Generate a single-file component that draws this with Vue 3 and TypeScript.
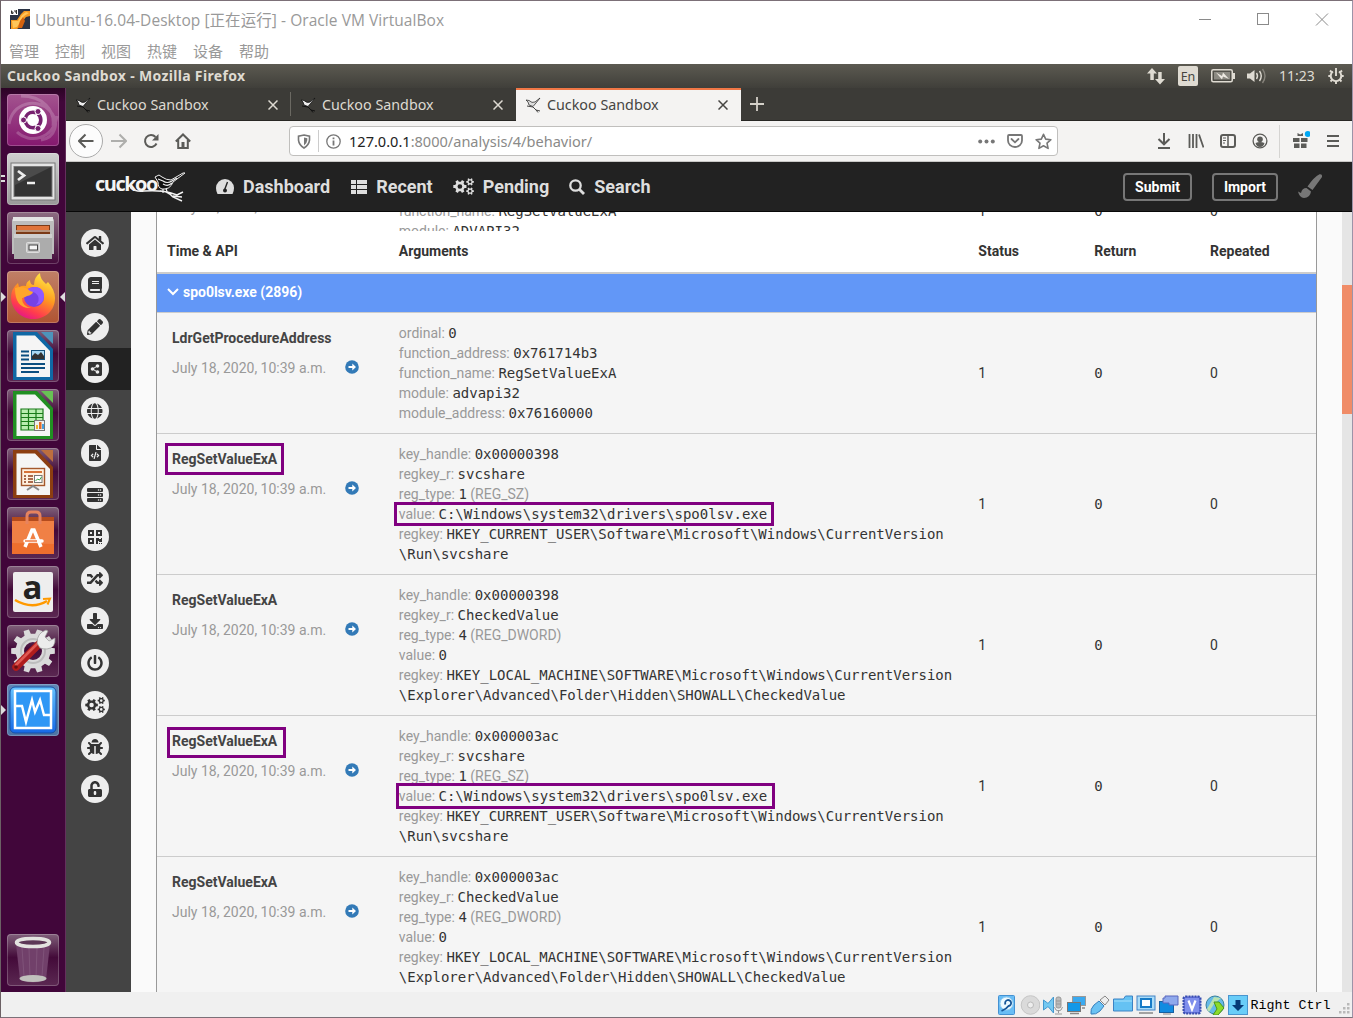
<script setup lang="ts">
interface Arg {
  label: string
  value: string
  note?: string
}
interface Call {
  api: string
  args: Arg[]
}
interface Glyph {
  name: string
  box: string
  w: number
  d: string
}

const menus = ['管理', '控制', '视图', '热键', '设备', '帮助']
const tabs = [{ active: false }, { active: false }, { active: true }]

function gear(cx: number, cy: number, outer: number, inner: number, hole: number, teeth: number): string {
  const step = (Math.PI * 2) / teeth
  const pts: string[] = []
  for (let i = 0; i < teeth; i++) {
    const a = i * step
    const spots: [number, number][] = [
      [a - step * 0.3, inner],
      [a - step * 0.2, outer],
      [a + step * 0.2, outer],
      [a + step * 0.3, inner],
    ]
    for (const [t, r] of spots) {
      pts.push(`${(cx + Math.cos(t) * r).toFixed(2)} ${(cy + Math.sin(t) * r).toFixed(2)}`)
    }
  }
  return (
    `M${pts.join('L')}Z` +
    `M${cx - hole} ${cy}a${hole} ${hole} 0 1 0 ${hole * 2} 0a${hole} ${hole} 0 1 0 ${-hole * 2} 0Z`
  )
}

const cogs = gear(210, 256, 205, 150, 72, 6) + gear(520, 115, 118, 85, 42, 6) + gear(520, 397, 118, 85, 42, 6)

const glyphs: Glyph[] = [
  { name: 'home', box: '0 0 576 512', w: 18, d: 'M280.37 148.26L96 300.11V464a16 16 0 0 0 16 16l112.06-.29a16 16 0 0 0 15.92-16V368a16 16 0 0 1 16-16h64a16 16 0 0 1 16 16v95.64a16 16 0 0 0 16 16.05L464 480a16 16 0 0 0 16-16V300L295.67 148.26a12.19 12.19 0 0 0-15.3 0zM571.6 251.47L488 182.56V44.05a12 12 0 0 0-12-12h-56a12 12 0 0 0-12 12v72.61L318.47 43a48 48 0 0 0-61 0L4.34 251.47a12 12 0 0 0-1.6 16.9l25.5 31A12 12 0 0 0 45.15 301l235.22-193.74a12.19 12.19 0 0 1 15.3 0L530.9 301a12 12 0 0 0 16.9-1.6l25.5-31a12 12 0 0 0-1.7-16.93z' },
  { name: 'summary', box: '0 0 448 512', w: 14, d: 'M448 360V24c0-13.3-10.7-24-24-24H96C43 0 0 43 0 96v320c0 53 43 96 96 96h328c13.3 0 24-10.7 24-24v-16c0-7.5-3.5-14.3-8.9-18.7-4.2-15.4-4.2-59.3 0-74.7 5.4-4.3 8.9-11.1 8.9-18.6zM128 134c0-3.3 2.7-6 6-6h212c3.3 0 6 2.7 6 6v20c0 3.3-2.7 6-6 6H134c-3.3 0-6-2.7-6-6v-20zm0 64c0-3.3 2.7-6 6-6h212c3.3 0 6 2.7 6 6v20c0 3.3-2.7 6-6 6H134c-3.3 0-6-2.7-6-6v-20zm253.4 250H96c-17.7 0-32-14.3-32-32 0-17.6 14.4-32 32-32h285.4c-1.9 17.1-1.9 46.9 0 64z' },
  { name: 'static', box: '0 0 512 512', w: 16, d: 'M497.9 142.1l-46.1 46.1c-4.7 4.7-12.3 4.7-17 0l-111-111c-4.7-4.7-4.7-12.3 0-17l46.1-46.1c18.7-18.7 49.1-18.7 67.9 0l60.1 60.1c18.8 18.7 18.8 49.1 0 67.9zM284.2 99.8L21.6 362.4.4 483.9c-2.9 16.4 11.4 30.6 27.8 27.8l121.5-21.3 262.6-262.6c4.7-4.7 4.7-12.3 0-17l-111-111c-4.8-4.7-12.4-4.7-17.1 0zM88 424h48v36.3l-64.5 11.3-31.1-31.1L51.7 376H88v48z' },
  { name: 'behavior', box: '0 0 448 512', w: 14, d: 'M448 80v352c0 26.51-21.49 48-48 48H48c-26.51 0-48-21.49-48-48V80c0-26.51 21.49-48 48-48h352c26.51 0 48 21.49 48 48zM304 296c-14.562 0-27.823 5.561-37.783 14.671l-67.958-40.775a56.339 56.339 0 0 0 0-27.793l67.958-40.775C276.177 210.439 289.438 216 304 216c30.928 0 56-25.072 56-56s-25.072-56-56-56-56 25.072-56 56c0 4.797.605 9.453 1.74 13.897l-67.958 40.775C171.823 205.561 158.562 200 144 200c-30.928 0-56 25.072-56 56s25.072 56 56 56c14.562 0 27.823-5.561 37.783-14.671l67.958 40.775a56.088 56.088 0 0 0-1.74 13.897c0 30.928 25.072 56 56 56s56-25.072 56-56C360 321.072 334.928 296 304 296z' },
  { name: 'network', box: '0 0 496 512', w: 15.5, d: 'M336.5 160C322 70.7 287.8 8 248 8s-74 62.7-88.5 152h177zM152 256c0 22.2 1.2 43.5 3.3 64h185.3c2.1-20.5 3.3-41.8 3.3-64s-1.2-43.5-3.3-64H155.3c-2.1 20.5-3.3 41.8-3.3 64zm324.7-96c-28.6-67.9-86.5-120.4-158-141.6 24.4 33.8 41.2 84.7 50 141.6h108zM177.2 18.4C105.8 39.6 47.8 92.1 19.3 160h108c8.7-56.9 25.5-107.8 49.9-141.6zM487.4 192H372.7c2.1 21 3.3 42.5 3.3 64s-1.2 43-3.3 64h114.6c5.5-20.5 8.6-41.8 8.6-64s-3.1-43.5-8.5-64zM120 256c0-21.5 1.2-43 3.3-64H8.6C3.2 212.5 0 233.8 0 256s3.2 43.5 8.6 64h114.6c-2-21-3.2-42.5-3.2-64zm39.5 96c14.5 89.3 48.7 152 88.5 152s74-62.7 88.5-152h-177zm159.3 141.6c71.4-21.2 129.4-73.7 158-141.6h-108c-8.8 56.9-25.6 107.8-50 141.6zM19.3 352c28.6 67.9 86.5 120.4 158 141.6-24.4-33.8-41.2-84.7-50-141.6h-108z' },
  { name: 'dropped', box: '0 0 384 512', w: 12, d: 'M384 121.941V128H256V0h6.059c6.365 0 12.47 2.529 16.971 7.029l97.941 97.941A24.005 24.005 0 0 1 384 121.941zM248 160c-13.2 0-24-10.8-24-24V0H24C10.745 0 0 10.745 0 24v464c0 13.255 10.745 24 24 24h336c13.255 0 24-10.745 24-24V160H248zM123.206 400.505a5.4 5.4 0 0 1-7.633.246l-64.866-60.812a5.4 5.4 0 0 1 0-7.879l64.866-60.812a5.4 5.4 0 0 1 7.633.246l19.579 20.885a5.4 5.4 0 0 1-.372 7.747L101.65 336l40.763 35.874a5.4 5.4 0 0 1 .372 7.747l-19.579 20.884zm51.295 50.479l-27.453-7.97a5.402 5.402 0 0 1-3.681-6.692l61.44-211.626a5.402 5.402 0 0 1 6.692-3.681l27.452 7.97a5.4 5.4 0 0 1 3.68 6.692l-61.44 211.626a5.397 5.397 0 0 1-6.69 3.681zm160.792-111.045l-64.866 60.812a5.4 5.4 0 0 1-7.633-.246l-19.58-20.885a5.4 5.4 0 0 1 .372-7.747L284.35 336l-40.763-35.874a5.4 5.4 0 0 1-.372-7.747l19.58-20.885a5.4 5.4 0 0 1 7.633-.246l64.866 60.812a5.4 5.4 0 0 1-.001 7.879z' },
  { name: 'buffers', box: '0 0 512 512', w: 16, d: [32, 192, 352].map((y) => `M32 ${y}h448a32 32 0 0 1 32 32v64a32 32 0 0 1-32 32H32a32 32 0 0 1-32-32v-64a32 32 0 0 1 32-32zM344 ${y + 64}a24 24 0 1 0 48 0a24 24 0 1 0-48 0zM408 ${y + 64}a24 24 0 1 0 48 0a24 24 0 1 0-48 0z`).join('') },
  { name: 'memory', box: '0 0 448 512', w: 14, d: 'M0 224h192V32H0v192zM64 96h64v64H64V96zm192-64v192h192V32H256zm128 128h-64V96h64v64zM0 480h192V288H0v192zm64-128h64v64H64v-64zm352-64h32v128h-96v-32h-32v96h-64V288h96v32h64v-32zm0 160h32v32h-32v-32zm-64 0h32v32h-32v-32z' },
  { name: 'compare', box: '0 0 512 512', w: 16, d: 'M504.971 359.029c9.373 9.373 9.373 24.569 0 33.941l-80 79.984c-15.01 15.01-40.971 4.49-40.971-16.971V416h-58.785a12.004 12.004 0 0 1-8.773-3.812l-70.556-75.596 53.333-57.143L352 336h32v-39.981c0-21.438 25.943-31.998 40.971-16.971l80 79.981zM12 176h84l52.781 56.551 53.333-57.143-70.556-75.596A11.999 11.999 0 0 0 122.785 96H12c-6.627 0-12 5.373-12 12v56c0 6.627 5.373 12 12 12zm372 0v39.984c0 21.46 25.961 31.98 40.971 16.971l80-79.984c9.373-9.373 9.373-24.569 0-33.941l-80-79.981C409.943 24.021 384 34.582 384 56.019V96h-58.785a12.004 12.004 0 0 0-8.773 3.812L96 336H12c-6.627 0-12 5.373-12 12v56c0 6.627 5.373 12 12 12h110.785c3.326 0 6.503-1.381 8.773-3.812L352 176h32z' },
  { name: 'export', box: '0 0 512 512', w: 16, d: 'M216 0h80c13.3 0 24 10.7 24 24v168h87.7c17.8 0 26.7 21.5 14.1 34.1L269.7 378.3c-7.5 7.5-19.8 7.5-27.3 0L90.1 226.1c-12.6-12.6-3.7-34.1 14.1-34.1H192V24c0-13.3 10.7-24 24-24zm296 376v112c0 13.3-10.7 24-24 24H24c-13.3 0-24-10.7-24-24V376c0-13.3 10.7-24 24-24h146.7l49 49c20.1 20.1 52.5 20.1 72.6 0l49-49H488c13.3 0 24 10.7 24 24zm-124 88c0-11-9-20-20-20s-20 9-20 20 9 20 20 20 20-9 20-20zm64 0c0-11-9-20-20-20s-20 9-20 20 9 20 20 20 20-9 20-20z' },
  { name: 'reboot', box: '0 0 512 512', w: 16, d: 'M400 54.1c63 45 104 118.6 104 201.9 0 136.8-110.8 247.7-247.5 248C120 504.3 8.2 393 8 256.4 7.9 173.1 48.9 99.3 111.8 54.2c11.7-8.3 28-4.8 35 7.7L162.6 90c5.9 10.5 3.1 23.8-6.6 31-41.5 30.8-68 79.6-68 134.9-.1 92.3 74.5 168.1 168 168.1 91.6 0 168.6-74.2 168-169.1-.3-51.8-24.7-101.8-68.1-134-9.7-7.2-12.4-20.5-6.5-30.9l15.8-28.1c7-12.4 23.2-16.1 34.8-7.8zM296 264V24c0-13.3-10.7-24-24-24h-32c-13.3 0-24 10.7-24 24v240c0 13.3 10.7 24 24 24h32c13.3 0 24-10.7 24-24z' },
  { name: 'options', box: '0 0 640 512', w: 20, d: cogs },
  { name: 'feedback', box: '0 0 512 512', w: 16, d: 'M511.988 288.9c-.478 17.43-15.217 31.1-32.653 31.1H424v16c0 21.864-4.882 42.584-13.6 61.145l60.228 60.228c12.496 12.497 12.496 32.758 0 45.255-12.498 12.497-32.759 12.496-45.256 0l-54.736-54.736C345.886 467.965 314.351 480 280 480V236c0-6.627-5.373-12-12-12h-24c-6.627 0-12 5.373-12 12v244c-34.351 0-65.886-12.035-90.636-32.108l-54.736 54.736c-12.498 12.497-32.759 12.496-45.256 0-12.496-12.497-12.496-32.758 0-45.255l60.228-60.228C92.882 378.584 88 357.864 88 336v-16H32.666C15.23 320 .491 306.33.013 288.9-.484 270.816 13.453 256 31.4 256H88v-58.745l-46.628-46.628c-12.496-12.497-12.496-32.758 0-45.255 12.498-12.497 32.758-12.497 45.256 0L141.255 160h229.489l54.627-54.627c12.498-12.497 32.758-12.497 45.256 0 12.496 12.497 12.496 32.758 0 45.255L424 197.255V256h56.6c17.9 0 31.9 14.8 31.388 32.9zM257 0c-61.856 0-112 50.144-112 112h224C369 50.144 318.856 0 257 0z' },
  { name: 'unlock', box: '0 0 448 512', w: 14, d: 'M400 256H152V152.9c0-39.6 31.7-72.5 71.3-72.9 40-.4 72.7 32.1 72.7 72v16c0 13.3 10.7 24 24 24h32c13.3 0 24-10.7 24-24v-16C376 68 307.5-.3 223.5 0 139.5.3 72 69.5 72 153.5V256H48c-26.5 0-48 21.5-48 48v160c0 26.5 21.5 48 48 48h352c26.5 0 48-21.5 48-48V304c0-26.5-21.5-48-48-48zM264 408c0 22.1-17.9 40-40 40s-40-17.9-40-40v-48c0-22.1 17.9-40 40-40s40 17.9 40 40v48z' },
]

const bigGear = gear(26, 26, 22, 17.5, 9, 10)

const share = (handle: string): Arg[] => [
  { label: 'key_handle:', value: handle },
  { label: 'regkey_r:', value: 'svcshare' },
  { label: 'reg_type:', value: '1', note: '(REG_SZ)' },
  { label: 'value:', value: 'C:\\Windows\\system32\\drivers\\spo0lsv.exe' },
  { label: 'regkey:', value: 'HKEY_CURRENT_USER\\Software\\Microsoft\\Windows\\CurrentVersion' },
  { label: '', value: '\\Run\\svcshare' },
]
const checked = (handle: string): Arg[] => [
  { label: 'key_handle:', value: handle },
  { label: 'regkey_r:', value: 'CheckedValue' },
  { label: 'reg_type:', value: '4', note: '(REG_DWORD)' },
  { label: 'value:', value: '0' },
  { label: 'regkey:', value: 'HKEY_LOCAL_MACHINE\\SOFTWARE\\Microsoft\\Windows\\CurrentVersion' },
  { label: '', value: '\\Explorer\\Advanced\\Folder\\Hidden\\SHOWALL\\CheckedValue' },
]
const calls: Call[] = [
  {
    api: 'LdrGetProcedureAddress',
    args: [
      { label: 'ordinal:', value: '0' },
      { label: 'function_address:', value: '0x761714b3' },
      { label: 'function_name:', value: 'RegSetValueExA' },
      { label: 'module:', value: 'advapi32' },
      { label: 'module_address:', value: '0x76160000' },
    ],
  },
  { api: 'RegSetValueExA', args: share('0x00000398') },
  { api: 'RegSetValueExA', args: checked('0x00000398') },
  { api: 'RegSetValueExA', args: share('0x000003ac') },
  { api: 'RegSetValueExA', args: checked('0x000003ac') },
]
const stamp = 'July 18, 2020, 10:39 a.m.'
</script>

<template>
  <div class="window">
    <header class="titlebar">
      <svg class="vbox" width="20" height="20" viewBox="0 0 20 20">
        <rect width="20" height="20" fill="#2b3345" />
        <path d="M1 11h6l4-6 3-3h6v5l-4 1-4 5-2 5-3 2H1z" fill="#f59a22" />
        <path d="M2 12h6l4-6 4-3 3 1-5 3-4 6-3 5-4 1z" fill="#ffc65a" />
        <path d="M10 12l3-4 2 4-3 7h-4z" fill="#d4620f" />
        <rect width="8" height="6" fill="#fff" /><path d="M1.5 1.500v3h1.500v-1.500h-1.500M5 1v2h2M6.500 1v4" stroke="#333" fill="none" />
      </svg>
      <span class="wtitle">Ubuntu-16.04-Desktop [正在运行] - Oracle VM VirtualBox</span>
      <svg width="130" height="14" viewBox="0 0 130 14" fill="none" stroke="#8a8a8a">
        <path d="M0 6.500h12" /><rect x="58.500" y=".5" width="11" height="11" /><path d="M117 .5l12 12M129 .5l-12 12" />
      </svg>
    </header>
    <nav class="menubar"><span v-for="m in menus" :key="m">{{ m }}</span></nav>

    <div class="panel">
      <b class="ptitle">Cuckoo Sandbox - Mozilla Firefox</b>
      <svg width="18" height="18" viewBox="0 0 18 18" fill="#dfdbd2"><path d="M5 1l5 5.500H6.800V13H3.300V6.500H0zM13 17.500L8 12h3.200V5h3.500v7H18z" /></svg>
      <span class="kbd">En</span>
      <svg width="24" height="14" viewBox="0 0 24 14"><rect x=".75" y=".75" width="20.500" height="12" rx="1.500" fill="none" stroke="#dfdbd2" stroke-width="1.500" /><rect x="3" y="3" width="16" height="7.500" fill="#8c8a82" /><path d="M22 4h2v6h-2z" fill="#dfdbd2" /><path d="M5 3.500L11 7l1-3.500L18 10l-6-2.500-1 3z" fill="#eeeae2" /></svg>
      <svg class="i-vol" width="20" height="16" viewBox="0 0 20 16" fill="none" stroke="#dfdbd2" stroke-width="1.400"><path d="M0 5.500h3L7.500 2v12L3 10.500H0z" fill="#dfdbd2" stroke="none" /><path d="M9.500 5q2 3 0 6M12.500 3q3.500 5 0 10" /><path d="M15.500 1q5 7 0 14" stroke="#85827a" /></svg>
      <span class="clock">11:23</span>
      <svg width="16" height="16" viewBox="0 0 16 16"><path d="M5 3.500a5.300 5.300 0 1 0 6 0" fill="none" stroke="#dfdbd2" stroke-width="2" /><path d="M8 0v8M.3 8H3M13 8h2.700M8 13v3M2 2.500l2 2M14 2.500l-2 2M2.500 13.500l2-2M13.500 13.500l-2-2" stroke="#dfdbd2" stroke-width="1.900" /></svg>
    </div>

    <div class="desktop">
      <aside class="launcher">
        <div class="tile" style="--t: #a3548f; --b: #85186f">
          <svg viewBox="0 0 52 52"><path d="M2 30C6 8 30 4 42 16s6 28-8 30M14 2c22 0 34 14 32 30M50 22C46 46 22 50 10 38" fill="none" stroke="#fff" stroke-opacity=".2" stroke-width="3" /><circle cx="26" cy="26" r="14" fill="#fff" /><circle cx="26" cy="26" r="7.800" fill="none" stroke="#77216f" stroke-width="3.600" stroke-dasharray="14.300 2.040" stroke-dashoffset="-9.200" /><g fill="#77216f" stroke="#fff"><circle cx="16.500" cy="26" r="3" /><circle cx="31" cy="17.500" r="3" /><circle cx="31" cy="34.500" r="3" /></g></svg>
        </div>
        <div class="tile" style="--t: #d0d0d0; --b: #999">
          <i class="pips"></i>
          <svg viewBox="0 0 52 52"><rect x="4" y="10" width="44" height="37" fill="#e4e4e4" stroke="#777" /><rect x="7" y="13.500" width="38" height="30" fill="#333" stroke="#777" /><path d="M8 14h36L8 32z" fill="#4b4b4b" /><path d="M11 18l6 4.500-6 4.500" fill="none" stroke="#eee" stroke-width="2.800" /><path d="M20 30h8" stroke="#eee" stroke-width="2.500" /></svg>
        </div>
        <div class="tile" style="--t: #8d6d82; --b: #43093a">
          <svg viewBox="0 0 52 52"><path d="M5 8l2-3h38l2 3v34H5z" fill="#bdbdbd" /><path d="M6 5h40v4H6z" fill="#e5e5e5" /><path d="M9 13h34v10H9z" fill="#7b3a17" /><path d="M10 14h32v4H10z" fill="#e0743a" /><path d="M9 19h34" stroke="#f7ede0" /><path d="M7 22h38v25H7z" fill="#acacac" /><path d="M7 22h38v4H7z" fill="#cfcfcf" /><rect x="19.500" y="30.500" width="13" height="10" rx="1" fill="#c6c6c6" stroke="#dedede" /><rect x="22" y="33" width="8.500" height="5" fill="#f5f5f5" stroke="#444" /></svg>
        </div>
        <div class="tile" style="--t: #c08067; --b: #b05432">
          <i class="tri left"></i><i class="tri right"></i>
          <svg viewBox="0 0 52 52"><defs><linearGradient id="ff" x1=".8" y1="0" x2=".3" y2="1"><stop offset="0" stop-color="#fff04a" /><stop offset=".45" stop-color="#ff9b1f" /><stop offset=".8" stop-color="#ff3b4e" /><stop offset="1" stop-color="#e3158b" /></linearGradient></defs><path d="M4 26q0-8 7-14l1 4q4-2 7-1 0-4 4-6 0 5 4 5 0-8 6-12 0 6 6 11l2-2q7 8 7 16C48 40 38 48 26 48S4 38 4 26z" fill="url(#ff)" /><circle cx="27" cy="26" r="10" fill="#7542e5" /><path d="M17 22q4-7 13-6 7 2 7 9 0 8-8 9 4-4 2-9-4-6-9-3z" fill="#9059ff" /><path d="M8 17q9-3 15 3l3 1q-1 3-6 4-4 2-5 2 0 8 9 10-16 1-16-20z" fill="#ffa62b" /></svg>
        </div>
        <div class="tile dim">
          <svg viewBox="0 0 52 52"><path d="M6 2h24l16 17v31H6z" fill="#0f68a5" /><path d="M34 2h12v12z" fill="#4d94bb" /><path d="M9.500 5.500H28L43 21v26H9.500z" fill="#f5f5f5" /><path d="M14 21.500h8M14 25.500h8M14 29.500h8M14 34h24M14 38h24M14 42h18" stroke="#0c4f80" stroke-width="1.900" /><rect x="24.500" y="20.500" width="13" height="9" fill="#a8d8f3" stroke="#15537d" /><path d="M25 29v-3l3-3 3 2 3-3 3 4v3z" fill="#333" /></svg>
        </div>
        <div class="tile dim">
          <svg viewBox="0 0 52 52"><path d="M6 2h24l16 17v31H6z" fill="#219022" /><path d="M34 2h12v12z" fill="#68c254" /><path d="M9.500 5.500H28L43 21v26H9.500z" fill="#f5f5f5" /><path d="M14 20h22v21H14z" fill="#b9edb0" /><path d="M14 20h22v21H14zM14 24.500h22M14 28.500h22M14 32.500h22M14 36.500h22M21.500 20v21M29 20v21" stroke="#197b19" stroke-width="1.200" fill="none" /><rect x="27.500" y="31.500" width="10" height="10" fill="#eee" stroke="#777" /><path d="M29 40v-4h2v4z" fill="#e8b52b" /><path d="M32 40v-7h2.500v7z" fill="#e36b29" /><path d="M35 40v-5h2v5z" fill="#469fdf" /></svg>
        </div>
        <div class="tile dim">
          <svg viewBox="0 0 52 52"><path d="M6 2h24l16 17v31H6z" fill="#8c3e11" /><path d="M34 2h12v12z" fill="#bd6f3f" /><path d="M9.500 5.500H28L43 21v26H9.500z" fill="#f5f5f5" /><rect x="14.500" y="20.500" width="23" height="17" fill="#fff1df" stroke="#a4582c" stroke-width="1.400" /><path d="M17 24h18" stroke="#d87338" stroke-width="2" /><path d="M17 28h2M17 31h2M17 34h2M21 28h5M21 31h5M21 34h5" stroke="#8e3e1b" stroke-width="1.500" /><rect x="27.500" y="27.500" width="7.500" height="7" fill="#fff" stroke="#777" /><path d="M28.500 33l2-2 2 1 2-3" stroke="#39a545" fill="none" /><path d="M20 42l6-4 6 4" stroke="#888" stroke-width="2" fill="none" /></svg>
        </div>
        <div class="tile dim">
          <svg viewBox="0 0 52 52"><path d="M5 11h42v36H5z" fill="#ee6f2e" /><path d="M5 10h42v4H5z" fill="#b44b1d" /><path d="M5 14h42v23L5 36z" fill="#f08045" /><path d="M20 17V9q0-4 4-4h5q4 0 4 4v8" fill="none" stroke="#e6835e" stroke-width="3" /><path d="M18 40l7-17h2l7 17" fill="none" stroke="#fff" stroke-width="3.500" /><path d="M18 34h17" stroke="#fff" stroke-width="3.500" stroke-linecap="round" /><path d="M18 34h12" stroke="#ed6222" stroke-width="1.300" /></svg>
        </div>
        <div class="tile dim">
          <svg viewBox="0 0 52 52"><rect x="6" y="6" width="40" height="40" rx="2" fill="#eee" /><text x="15.500" y="33" class="amz">a</text><path d="M8 34q17 10 32 1" fill="none" stroke="#f90" stroke-width="2.500" /><path d="M36 33l7-.5-2.500 6" fill="none" stroke="#f90" stroke-width="2" /></svg>
        </div>
        <div class="tile dim">
          <svg viewBox="0 0 52 52"><path :d="bigGear" fill="#dadada" fill-rule="evenodd" /><circle cx="26" cy="26" r="12" fill="none" stroke="#bdbdbd" stroke-width="2" /><path d="M9 42l23-23" stroke="#b01c1c" stroke-width="7.500" stroke-linecap="round" /><path d="M9 40l21-21" stroke="#df5852" stroke-width="2.500" stroke-linecap="round" /><path d="M30 18q0-10 9-13l2 1-3 6 4 4 6-3q1 10-8 11-4 0-7-1z" fill="#ececec" stroke="#999" stroke-width=".7" /><circle cx="9" cy="42" r="1.800" fill="#671010" /></svg>
        </div>
        <div class="tile" style="--t: #5e86b5; --b: #4d74a5">
          <i class="tri left"></i>
          <svg viewBox="0 0 52 52"><defs><linearGradient id="mon" x2="0" y2="1"><stop stop-color="#67c4ff" /><stop offset="1" stop-color="#1669e6" /></linearGradient></defs><rect x="3" y="3" width="46" height="46" rx="5" fill="url(#mon)" stroke="#1650a4" /><rect x="8" y="7" width="36" height="37" fill="#2f97f5" stroke="#fff" stroke-width="2.500" /><path d="M9 22h6l4 16 6-22 3 12 5-12 4 15h6" fill="none" stroke="#fff" stroke-width="2.400" /></svg>
        </div>
        <div class="tile dim trash">
          <svg viewBox="0 0 52 52"><path d="M9 10h34l-4 36q-13 5-26 0z" fill="#71406a" /><path d="M15 14l2 28M22 14l1 30M30 14l-1 30M37 14l-2 28" stroke="#8e6688" opacity=".5" /><ellipse cx="26" cy="44.500" rx="13.500" ry="3.500" fill="#c1c1bd" /><ellipse cx="26" cy="8.500" rx="16.500" ry="4" fill="#5c3856" stroke="#e3e3df" stroke-width="3.500" /></svg>
        </div>
      </aside>

      <div class="browser">
        <div class="tabs">
          <div v-for="(t, i) in tabs" :key="i" class="tab" :class="{ active: t.active }">
            <svg width="16" height="16" viewBox="0 0 16 16"><path d="M1 3l3 .5q3 3 6 1.500l5-4-4 5-3 3.500-4-1.500L3 5z" :fill="t.active ? '#ddd' : '#eee'" :stroke="t.active ? '#333' : '#111'" stroke-width=".8" /><path d="M2 9l6 1 3 3 4 1M11 13l2 2.500" :stroke="t.active ? '#444' : '#111'" fill="none" /></svg>
            <span>Cuckoo Sandbox</span>
            <svg width="10" height="10" viewBox="0 0 10 10"><path d="M.5.5l9 9M9.500.5l-9 9" stroke="currentColor" stroke-width="1.500" /></svg>
          </div>
          <svg class="plus" width="14" height="14" viewBox="0 0 14 14"><path d="M7 0v14M0 7h14" stroke="#d4d0c8" stroke-width="1.800" /></svg>
        </div>

        <div class="toolbar">
          <span class="back"><svg width="16" height="16" viewBox="0 0 16 16" class="st"><path d="M15.500 8H1M7.500 1.500L1 8l6.500 6.500" /></svg></span>
          <span class="cell pale"><svg width="16" height="16" viewBox="0 0 16 16" class="st"><path d="M0 8h15M8.500 1.500L15 8l-6.500 6.500" /></svg></span>
          <span class="cell"><svg width="16" height="16" viewBox="0 0 16 16" class="st"><path d="M13.500 10.500A6 6 0 1 1 12.500 4" /><path d="M15.500 1v6.500H9z" fill="#5b5b58" stroke="none" /></svg></span>
          <span class="cell"><svg width="16" height="16" viewBox="0 0 16 16" class="st"><path d="M.8 8.500L8 1.500l7.200 7M3.200 7v8h9.600V7" /><path d="M6.500 15V9h3v6z" fill="#5b5b58" stroke="none" /></svg></span>
          <div class="url">
            <svg width="14" height="15" viewBox="0 0 14 15"><path d="M7 1l5.500 1.200v4Q12 11 7 14 2 11 1.500 6.200v-4z" fill="none" stroke="#777" stroke-width="1.600" /><path d="M7 3.500v8Q10 9.500 10.300 6V4.300z" fill="#777" /></svg>
            <i class="usep"></i>
            <svg width="15" height="15" viewBox="0 0 15 15"><circle cx="7.500" cy="7.500" r="6.700" fill="none" stroke="#777" stroke-width="1.300" /><path d="M7.500 6.500v5M7.500 3.500v1.800" stroke="#777" stroke-width="1.800" /></svg>
            <span class="addr"><em>127.0.0.1</em>:8000/analysis/4/behavior/</span>
            <svg width="17" height="5" viewBox="0 0 17 5" fill="#777"><circle cx="2.200" cy="2.500" r="2" /><circle cx="8.500" cy="2.500" r="2" /><circle cx="14.800" cy="2.500" r="2" /></svg>
            <svg class="pocket" width="16" height="14" viewBox="0 0 16 14" fill="none" stroke="#777" stroke-width="1.800"><path d="M2 1h12q1 0 1 1v4.500a7 6.500 0 0 1-14 0V2q0-1 1-1z" /><path d="M4.500 5L8 8.300 11.500 5" stroke-linecap="round" /></svg>
            <svg class="star" width="17" height="17" viewBox="0 0 17 17"><path d="M8.500 1.300l2.200 4.800 5.200.6-3.900 3.500 1.100 5.200-4.600-2.600-4.600 2.600L5 10.200 1.100 6.700l5.200-.6z" fill="none" stroke="#777" stroke-width="1.600" stroke-linejoin="round" /></svg>
          </div>
          <span class="cell first"><svg width="14" height="16" viewBox="0 0 14 16" class="st"><path d="M7 0v11M1.500 6L7 11.300 12.500 6M1 15h12" /></svg></span>
          <span class="cell"><svg width="16" height="16" viewBox="0 0 16 16" class="st"><path d="M1.500 1v14M5 1v14M8.500 1v14M11 1.500L15.500 14.500" stroke-width="1.800" /></svg></span>
          <span class="cell"><svg width="16" height="14" viewBox="0 0 16 14" class="st"><rect x="1" y="1" width="14" height="12" rx="2" /><path d="M8 1v12" stroke-width="1.500" /><path d="M3 4h3M3 6.500h3M3 9h2" stroke-width="1.100" /></svg></span>
          <span class="cell"><svg width="16" height="16" viewBox="0 0 16 16"><circle cx="8" cy="8" r="6.900" fill="none" stroke="#5b5b58" stroke-width="1.300" /><circle cx="8" cy="6.200" r="2.800" fill="#5b5b58" /><path d="M3.500 10q4.500-2 9 0-1 4-4.500 4t-4.500-4z" fill="#5b5b58" /></svg></span>
          <i class="tsep"></i>
          <span class="cell"><svg width="18" height="20" viewBox="0 0 18 20" fill="#5b5b58"><path d="M1 7h6.500v4H1zM9 7h6.500v4H9zM2 12.500h5.500V17H2zM9 12.500h5.500V17H9zM5.500 2l2.700 1.500L11 2v3H5.500z" /><circle cx="15.800" cy="3" r="3" fill="#00a8f5" /></svg></span>
          <span class="cell"><svg width="12" height="14" viewBox="0 0 12 14" class="st"><path d="M0 2h12M0 7h12M0 12h12" /></svg></span>
        </div>

        <div class="nav">
          <span class="brand">cuckoo</span>
          <svg class="bird" width="56" height="32" viewBox="0 0 56 32" fill="none" stroke="#f2f2f2"><path d="M25 6l4-2 3 2q4 3 9 3L53 2l2 0-12 9q-3 8-11 7-4-1-4-7z" fill="#111" /><path d="M28 8l5 2q4 3 9 0l5-3M33 13q5 3 9-1M33 18v4M36 17l1 4" stroke-width="1.200" /><path d="M0 16q4 5 14 4 17-1 27 2l6 2 6-3M30 20q8 0 13 6l9 4M43 25l9 1" stroke-width="1.500" /></svg>
          <svg width="18" height="15" viewBox="0 0 18 15"><path d="M9 0a9 9 0 0 0-9 9q0 3 1.500 6h15Q18 12 18 9a9 9 0 0 0-9-9z" fill="#dedede" /><path d="M8.500 11l3-8" stroke="#222" stroke-width="1.400" /><circle cx="9" cy="11.500" r="2" fill="#222" /></svg>
          <span>Dashboard</span>
          <svg class="n2" width="16" height="14" viewBox="0 0 16 14" fill="#dedede"><path d="M0 0h5v4H0zM6 0h10v4H6zM0 5h5v4H0zM6 5h10v4H6zM0 10h5v4H0zM6 10h10v4H6z" /></svg>
          <span>Recent</span>
          <svg class="n3" width="21" height="17" viewBox="0 0 640 512"><path :d="cogs" fill="#dedede" fill-rule="evenodd" /></svg>
          <span>Pending</span>
          <svg class="n4" width="16" height="16" viewBox="0 0 16 16" fill="none" stroke="#dedede"><circle cx="6.500" cy="6.500" r="5.200" stroke-width="2.300" /><path d="M10.500 10.500l4.500 4.500" stroke-width="2.800" /></svg>
          <span>Search</span>
          <b class="btn submit">Submit</b>
          <b class="btn">Import</b>
          <svg class="brush" width="24" height="24" viewBox="0 0 24 24" fill="#777"><path d="M21.500.3Q24.500 0 24 3L14.500 16 9.500 12.500Q16 3 21.500.3zM8.500 14l4.500 3.500Q12 24 6 24 1.500 24 0 17.500l3 1.500Q4 14 8.500 14z" /></svg>
        </div>

        <div class="page">
          <div class="side">
            <div v-for="g in glyphs" :key="g.name" class="sitem" :class="{ on: g.name === 'behavior' }">
              <span class="disc"><svg :width="g.w" height="16" :viewBox="g.box"><path :d="g.d" fill="#333" fill-rule="evenodd" /></svg></span>
            </div>
          </div>

          <div class="table">
            <div class="peek">
              <div class="row prev">
                <div class="c1"><small>{{ stamp }}</small></div>
                <div class="c2"><p><label>function_name: </label>RegSetValueExA</p><p><label>module: </label>ADVAPI32</p></div>
                <div class="num">1</div><div class="num mono">0</div><div class="num">0</div>
              </div>
            </div>
            <div class="head">
              <b class="c1">Time &amp; API</b><b class="c2">Arguments</b><b class="num">Status</b><b class="num">Return</b><b class="num">Repeated</b>
            </div>
            <div class="group"><svg width="12" height="8" viewBox="0 0 12 8"><path d="M1 1l5 5 5-5" fill="none" stroke="#fff" stroke-width="2" /></svg><b>spo0lsv.exe (2896)</b></div>
            <div v-for="(c, i) in calls" :key="i" class="row">
              <div class="c1">
                <strong>{{ c.api }}</strong>
                <small>{{ stamp }}<svg width="14" height="14" viewBox="0 0 14 14"><circle cx="7" cy="7" r="6.800" fill="#337ab7" /><path d="M3.500 6h3.800V3.500L11 7l-3.700 3.500V8H3.500z" fill="#fff" /></svg></small>
              </div>
              <div class="c2">
                <p v-for="a in c.args" :key="a.label"><label v-if="a.label">{{ a.label + ' ' }}</label>{{ a.value }}<label v-if="a.note">{{ ' ' + a.note }}</label></p>
              </div>
              <div class="num">1</div><div class="num mono">0</div><div class="num">0</div>
            </div>
          </div>
          <div class="scroll"><i></i></div>
        </div>
      </div>
    </div>

    <footer class="status">
      <svg width="20" height="20" viewBox="0 0 20 20"><rect x="1.500" y=".5" width="16" height="19" rx="1" fill="#69bdf5" stroke="#4391d2" /><circle cx="9.500" cy="8.500" r="6.500" fill="#eefaff" stroke="#9bd0f2" /><path d="M8.500 9.500a3 3 0 1 1 3 1.500q-2 3-7 5" fill="none" stroke="#175799" stroke-width="1.800" /></svg>
      <svg width="20" height="20" viewBox="0 0 20 20"><circle cx="10.500" cy="10" r="9.300" fill="#dadada" stroke="#c5c5c5" /><circle cx="10.500" cy="10" r="3" fill="#eee" stroke="#bbb" /></svg>
      <svg width="20" height="20" viewBox="0 0 20 20"><path d="M.5 5l4 3h1l5-6v16l-5-6h-1l-4 3z" fill="#73c9f2" stroke="#4598cf" /><rect x="13" y="2" width="5" height="11" rx="2" fill="#bbb" stroke="#999" /><path d="M13 6h5M13 9h5M11.500 12q1 4 4 4t4-4M15.500 15v3M12 19h7" stroke="#999" fill="none" /></svg>
      <svg width="20" height="20" viewBox="0 0 20 20"><rect x="6.500" y="1.500" width="13" height="9" fill="#3aa9ef" stroke="#999" /><rect x="1.500" y="7.500" width="13" height="9" fill="#1298e8" stroke="#777" /><path d="M4 18.500h9M16 13h3" stroke="#888" stroke-width="1.600" /></svg>
      <svg width="20" height="20" viewBox="0 0 20 20"><path d="M1 19q-1-5 3-9l5-4 5 5-4 5q-4 4-9 3z" fill="#6bc2f3" stroke="#3980bd" /><path d="M10 5l5-4 4 4-4 5z" fill="#eee" stroke="#888" /></svg>
      <svg width="20" height="20" viewBox="0 0 20 20"><path d="M.5 4h10l2-3h7v15H.5z" fill="#65c2f3" stroke="#3c83c4" /><path d="M1 6h18" stroke="#a5e0fb" /></svg>
      <svg width="20" height="20" viewBox="0 0 20 20"><rect x="1" y="1" width="18" height="14" fill="#aadcf8" stroke="#4283c5" /><rect x="5" y="4" width="10" height="8" fill="#fff" stroke="#177bc7" stroke-width="2" /><path d="M3 18h14" stroke="#999" stroke-width="1.800" /></svg>
      <svg width="20" height="20" viewBox="0 0 20 20"><rect x=".5" y="6.500" width="14" height="11" fill="#128be0" stroke="#1760a0" /><path d="M4 3h2V1h13v9h-9V8H4z" fill="#8fa9ec" stroke="#5867be" /><path d="M4 19h8" stroke="#888" /></svg>
      <svg width="20" height="20" viewBox="0 0 20 20"><rect x="1.500" y="1.500" width="17" height="17" rx="2" fill="#6673dd" stroke="#384eb0" stroke-width="2" stroke-dasharray="2 1" /><rect x="3" y="3" width="14" height="14" fill="#7f8fec" /><path d="M6.500 5.500l3.500 9 3.500-9" fill="none" stroke="#fff" stroke-width="2.200" /></svg>
      <svg width="20" height="20" viewBox="0 0 20 20"><circle cx="10" cy="10" r="9" fill="#65b9e8" stroke="#39819c" /><path d="M2 14L9 2l7 1-7 6-5 8z" fill="#b9e3b1" /><path d="M9 7h5l5 6-6 7H8l4-6z" fill="#8cdb2b" stroke="#4a961b" /></svg>
      <svg width="20" height="20" viewBox="0 0 20 20"><rect x=".5" y=".5" width="19" height="19" fill="#69cdf8" stroke="#4995cf" /><path d="M7.500 5h5v5H16l-6 6-6-6h3.500z" fill="#063a76" /></svg>
      <span>Right Ctrl</span>
      <svg class="grip" width="11" height="11" viewBox="0 0 11 11" fill="#b9b9b9"><path d="M8 0h2.500v2.500H8zM4 4h2.500v2.500H4zM8 4h2.500v2.500H8zM0 8h2.500v2.500H0zM4 8h2.500v2.500H4zM8 8h2.500v2.500H8z" /></svg>
    </footer>

    <i class="mark m1"></i><i class="mark m2"></i><i class="mark m3"></i><i class="mark m4"></i>
  </div>
</template>

<style>
body { margin: 0; overflow: hidden; }
</style>

<style scoped>
* { box-sizing: border-box; }
svg { display: block; flex: none; }
i, em { font-style: normal; }
.window { position: relative; width: 1353px; height: 1018px; border: 1px solid #7c7078; border-left-color: #6b6064; border-right-color: #9c93a8; display: flex; flex-direction: column; background: #fff; overflow: hidden; font-family: Roboto, "Noto Sans CJK SC", sans-serif; }
.titlebar { height: 37px; display: flex; align-items: center; padding: 0 23px 0 9px; }
.vbox { margin-top: -1px; }
.wtitle { margin: 0 0 0 5px; font: 15.5px/20px "Open Sans", "Noto Sans CJK SC", sans-serif; letter-spacing: .06px; color: #999; flex: 1; white-space: nowrap; }
.menubar { height: 26px; display: flex; gap: 16px; padding: 3px 0 0 8px; font: 15px/20px "Noto Sans CJK SC", sans-serif; color: #999; }
.panel { height: 24px; display: flex; align-items: center; background: linear-gradient(#5c5a51, #403f3a); padding: 0 8px 0 6px; font-family: "Noto Sans", sans-serif; color: #dfdbd2; }
.ptitle { font-size: 14px; letter-spacing: .33px; flex: 1; margin-top: -2px; }
.kbd { width: 20px; height: 20px; border-radius: 2px; background: #dfdbd2; color: #45443e; font-size: 12.5px; line-height: 21px; text-align: center; margin: 0 13px; }
.i-vol { margin: 0 13px 0 12px; }
.clock { font-size: 14px; margin: -2px 14px 0 -1px; width: 35px; }
.desktop { display: flex; height: 904px; flex: none; }
.launcher { width: 65px; background: linear-gradient(#2c0425, #41063a 14px); border-right: 1px solid #64305c; padding: 6px 0 6px 6px; display: flex; flex-direction: column; gap: 7px; flex: none; }
.tile { position: relative; width: 52px; height: 52px; border-radius: 4px; background: linear-gradient(var(--t), var(--b)); box-shadow: inset 0 0 0 1px rgba(255, 255, 255, .22); flex: none; }
.tile svg { width: 52px; height: 52px; }
.dim { background: linear-gradient(#80607a, #430a39 45%, #5b2852); }
.trash { margin-top: auto; }
.amz { font: bold 33px "Open Sans", sans-serif; fill: #222; }
.pips { position: absolute; left: -6px; top: 22px; width: 4px; height: 7px; border: solid #ddd; border-width: 2px 0; }
.tri { position: absolute; top: 21px; border: 5px solid transparent; }
.tri.left { left: -6px; border-left-color: #ddd; border-right: 0; }
.tri.right { right: -6px; border-right-color: #ddd; border-left: 0; }
.browser { flex: 1; display: flex; flex-direction: column; min-width: 0; }
.tabs { height: 33px; background: #3c3b37; border-bottom: 1px solid #282724; display: flex; align-items: stretch; flex: none; }
.tab { width: 225px; display: flex; align-items: center; padding: 2px 13px 0 9px; color: #dedad2; font: 14.3px/20px "Noto Sans", sans-serif; background: linear-gradient(#6b6962, #6b6962) right center / 1px 24px no-repeat; }
.tab span { margin-left: 6px; flex: 1; }
.tab:nth-child(2) { background: none; }
.tab.active { background: #f4f3f2; border-top: 2px solid #f07746; color: #464542; height: 33px; padding-top: 0; padding-bottom: 1px; }
.plus { margin: 9px 0 0 9px; }
.toolbar { height: 41px; background: #f4f3f2; border-bottom: 1px solid #c9c8c6; display: flex; align-items: center; padding: 0 3px 0 3px; flex: none; }
.st { fill: none; stroke: #5b5b58; stroke-width: 2; }
.back { width: 34px; height: 34px; border: 1px solid #aaa; border-radius: 50%; background: #fcfcfc; display: grid; place-items: center; }
.cell { width: 32px; height: 32px; display: grid; place-items: center; flex: none; }
.pale { opacity: .45; }
.url { width: 769px; height: 30px; margin-left: 90px; border: 1px solid #c0bfbd; border-radius: 4px; background: #fff; display: flex; align-items: center; padding-left: 7px; flex: none; }
.usep { width: 1px; height: 22px; background: #ccc; margin: 0 7px; }
.addr { flex: 1; margin-left: 8px; font: 14.55px/20px "Noto Sans", sans-serif; color: #8a8a88; }
.addr em { color: #222; }
.pocket { margin: 0 12px; }
.star { margin-right: 5px; }
.first { margin-left: 90px; }
.tsep { width: 1px; height: 33px; background: #d5d4d2; margin: 0 5px 0 3px; }
.nav { height: 50px; background: #222; border-bottom: 1px solid #080808; display: flex; align-items: center; color: #dedede; font: 500 18px/24px Roboto, sans-serif; flex: none; }
.brand { font: bold 20px/24px "Open Sans", sans-serif; letter-spacing: -1.5px; color: #f5f5f5; margin: -5px 0 0 29px; width: 35px; }
.bird { margin: 0 30px 0 0; }
.nav span:not(.brand) { font-weight: 700; margin-left: 9px; }
.n2 { margin-left: 21px; }
.n3, .n4 { margin-left: 20px; }
.btn { border: 2px solid #777; border-radius: 4px; height: 28px; width: 66px; text-align: center; font: 700 14px/24px Roboto, sans-serif; color: #fff; margin-right: 20px; }
.submit { margin-left: auto; width: 69px; }
.brush { margin: -2px 30px 0 0; }
.page { flex: 1; display: flex; background: #fafafa; min-height: 0; overflow: hidden; }
.side { width: 65px; background: #444; padding-top: 10px; flex: none; }
.sitem { height: 42px; display: flex; align-items: center; padding-left: 15px; }
.sitem.on { background: #222; }
.disc { width: 28px; height: 28px; border-radius: 50%; background: #eee; display: grid; place-items: center; }
.table { margin-left: 25px; width: 1161px; border: solid #999; border-width: 0 1px; font-size: 14px; line-height: 20px; color: #333; flex: none; }
.peek { height: 19px; overflow: hidden; background: #fff; }
.row { height: 141px; display: flex; align-items: center; background: #f5f5f5; border-bottom: 1px solid #ccc; }
.row:nth-child(4) { height: 121px; }
.row.prev { background: #fff; height: 42px; margin-top: -21px; border: 0; }
.c1 { width: 20%; padding-left: 10px; flex: none; }
.c2 { width: 50%; padding-left: 10px; flex: none; }
.num { width: 10%; padding-left: 10px; flex: none; }
.mono { font-family: "DejaVu Sans Mono", monospace; }
.row > .c1, .row > .c2 { align-self: flex-start; padding-top: 10px; }
.row > .c1 { padding: 15px 0 0 15px; }
.row.prev > .c1 { padding-top: 0; }
.row.prev > .num { margin-top: -2px; }
.row.prev .c1 small { margin-top: 6px; }
.c1 strong { display: block; font-weight: 700; color: #444; }
.c1 small { display: flex; align-items: center; font-size: 14px; margin-top: 10px; color: #999; }
.c1 small svg { margin: -2px 0 0 18.400px; }
.c2 p { margin: 0; height: 20px; white-space: pre; font: 14px/20px "DejaVu Sans Mono", monospace; }
.c2 label { font-family: Roboto, sans-serif; color: #999; white-space: pre; }
.head { height: 43px; background: #fff; border-bottom: 2px solid #ccc; display: flex; align-items: center; padding-bottom: 2px; }
.group { height: 39px; background: #6297f7; border-bottom: 1px solid #ccc; display: flex; align-items: center; color: #fff; padding: 0 0 3px 10px; gap: 4px; }
.group b { letter-spacing: -.03px; }
.scroll { width: 10px; margin-left: auto; background: #e5e5e5; padding-top: 73px; }
.scroll i { display: block; height: 129px; background: #f08c67; }
.status { flex: 1; background: #f0f0f0; display: flex; align-items: center; gap: 3.150px; padding-left: 996px; }
.status span { font: 13.33px/20px "Liberation Mono", monospace; color: #000; margin: 2px 0 0 -1px; white-space: pre; }
.grip { margin: 8px 0 0 5px; }
.mark { position: absolute; border: 3px solid #800080; }
.m1 { left: 164px; top: 442px; width: 119px; height: 32px; }
.m2 { left: 393px; top: 501px; width: 380px; height: 24px; }
.m3 { left: 166px; top: 726px; width: 119px; height: 31px; }
.m4 { left: 395px; top: 782px; width: 379px; height: 26px; }
</style>
